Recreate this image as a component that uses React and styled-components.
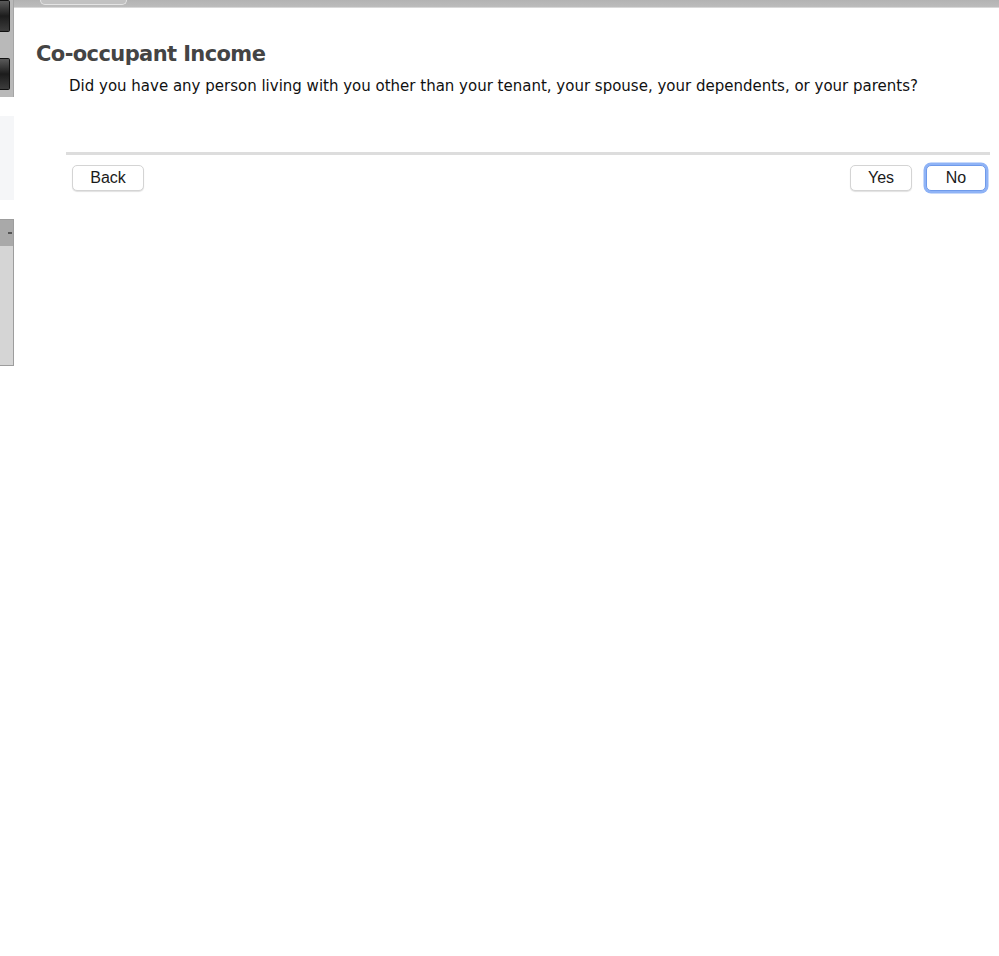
import React from 'react';
import styled, { createGlobalStyle } from 'styled-components';

const GlobalStyle = createGlobalStyle`
  html, body {
    margin: 0;
    padding: 0;
    background: #ffffff;
  }
`;

const Page = styled.div`
  display: flex;
  width: 999px;
  height: 956px;
  overflow: hidden;
  background: #ffffff;
`;

const SideStrip = styled.div`
  width: 14px;
  flex-shrink: 0;
  display: flex;
  flex-direction: column;
`;

const SideTools = styled.div`
  height: 97px;
  background: #b9b9b9;
  border-right: 1px solid #a5a5a5;
  box-sizing: border-box;
  display: flex;
  flex-direction: column;
  gap: 26px;
`;

const SideButton = styled.div`
  width: 10px;
  height: 32px;
  background: linear-gradient(#5a5a5a, #1c1c1c 50%, #3c3c3c);
  border: 1px solid #111;
  border-left: none;
  border-radius: 0 2px 2px 0;
  box-sizing: border-box;
`;

const SideNote = styled.div`
  margin-top: 19px;
  height: 84px;
  background: #f5f6f8;
`;

const SidePanel = styled.div`
  margin-top: 19px;
  height: 147px;
  border: 1px solid #9d9d9d;
  border-left: none;
  box-sizing: border-box;
  display: flex;
  flex-direction: column;
`;

const SidePanelHead = styled.div`
  height: 26px;
  background: #a9a9a9;
  display: flex;
  align-items: center;
  justify-content: flex-end;
  padding-right: 1px;

  &::after {
    content: '';
    width: 4px;
    height: 2px;
    background: #555;
  }
`;

const SidePanelBody = styled.div`
  flex: 1;
  background: #d5d5d5;
`;

const Main = styled.div`
  flex: 1;
  display: flex;
  flex-direction: column;
`;

const TopBar = styled.div`
  height: 7px;
  background: linear-gradient(#b3b3b3, #bcbcbc);
  border-bottom: 1px solid #d8d8d8;
  padding-left: 26px;
  display: flex;
`;

const TopTab = styled.div`
  width: 85px;
  height: 4px;
  border: 1px solid #e4e4e4;
  border-top: none;
  border-radius: 0 0 6px 6px;
  background: #c2c2c2;
`;

const Content = styled.div`
  padding: 31px 9px 0 22px;
`;

const Title = styled.h1`
  margin: 0;
  font-family: "DejaVu Sans", Verdana, sans-serif;
  font-weight: bold;
  font-size: 21px;
  letter-spacing: -0.6px;
  color: #444444;
  line-height: 30px;
`;

const Question = styled.p`
  margin: 7px 0 0 33px;
  font-family: "DejaVu Sans", Verdana, sans-serif;
  font-size: 15px;
  color: #111;
  line-height: 20px;
`;

const Divider = styled.div`
  margin: 56px 0 0 30px;
  height: 3px;
  background: #dddddd;
`;

const ButtonRow = styled.div`
  display: flex;
  align-items: center;
  margin: 10px 4px 0 36px;
  gap: 14px;
`;

const Spacer = styled.div`
  flex: 1;
`;

const Button = styled.button`
  width: ${p => p.$w}px;
  height: 26px;
  box-sizing: border-box;
  background: #ffffff;
  border: 1px solid ${p => (p.$focus ? '#6f9aea' : '#d4d4d4')};
  border-radius: 5px;
  font-family: "Liberation Sans", Arial, sans-serif;
  font-size: 16px;
  color: #1a1a1a;
  padding: 0;
  box-shadow: ${p =>
    p.$focus ? '0 0 0 2.5px #8fb3f6' : '0 1px 1px rgba(0,0,0,0.12)'};
  cursor: default;
`;

export default function App() {
  return (
    <>
      <GlobalStyle />
      <Page>
        <SideStrip>
          <SideTools>
            <SideButton />
            <SideButton />
          </SideTools>
          <SideNote />
          <SidePanel>
            <SidePanelHead />
            <SidePanelBody />
          </SidePanel>
        </SideStrip>
        <Main>
          <TopBar>
            <TopTab />
          </TopBar>
          <Content>
            <Title>Co-occupant Income</Title>
            <Question>
              Did you have any person living with you other than your tenant, your spouse, your dependents, or your parents?
            </Question>
            <Divider />
            <ButtonRow>
              <Button $w={72}>Back</Button>
              <Spacer />
              <Button $w={62}>Yes</Button>
              <Button $w={60} $focus>No</Button>
            </ButtonRow>
          </Content>
        </Main>
      </Page>
    </>
  );
}
